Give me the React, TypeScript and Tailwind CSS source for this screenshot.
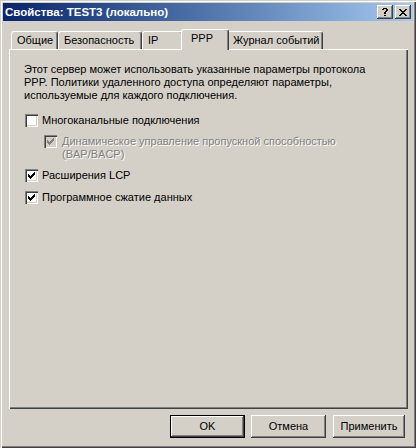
import React from "react";

const CHECK = [
  [6],
  [5, 6],
  [0, 4, 5, 6],
  [0, 1, 3, 4, 5],
  [0, 1, 2, 3, 4],
  [1, 2, 3],
  [2],
];

const CLOSE = [
  [0, 1, 6, 7],
  [1, 2, 5, 6],
  [2, 3, 4, 5],
  [3, 4],
  [2, 3, 4, 5],
  [1, 2, 5, 6],
  [0, 1, 6, 7],
];

const HELP = [
  [1, 2, 3, 4],
  [0, 1, 4, 5],
  [4, 5],
  [3, 4],
  [2, 3],
  [2, 3],
  [],
  [2, 3],
];

function Pixels({ rows, w, color }: { rows: number[][]; w: number; color: string }) {
  return (
    <svg width={w} height={rows.length} viewBox={`0 0 ${w} ${rows.length}`} shapeRendering="crispEdges">
      {rows.map((r, y) =>
        r.map((x) => <rect key={`${x}-${y}`} x={x} y={y} width={1} height={1} fill={color} />)
      )}
    </svg>
  );
}

function CheckBox({ checked, disabled }: { checked: boolean; disabled?: boolean }) {
  return (
    <div
      className={`w-[13px] h-[13px] shrink-0 flex items-center justify-center shadow-[inset_1px_1px_#808080,inset_2px_2px_#404040,inset_-1px_-1px_#ffffff,inset_-2px_-2px_#d4d0c8] ${
        disabled ? "bg-[#d4d0c8]" : "bg-white"
      }`}
    >
      {checked && <Pixels rows={CHECK} w={7} color={disabled ? "#808080" : "#000000"} />}
    </div>
  );
}

function CaptionButton({ children }: { children: React.ReactNode }) {
  return (
    <div className="w-[16px] h-[14px] bg-[#d4d0c8] flex items-center justify-center shadow-[inset_-1px_-1px_#404040,inset_1px_1px_#ffffff,inset_-2px_-2px_#808080]">
      {children}
    </div>
  );
}

function Tab({ label, width, selected }: { label: string; width: number; selected?: boolean }) {
  if (selected) {
    return (
      <div
        style={{ width: width + 4 }}
        className="relative z-10 h-[21px] -mx-[2px] -mb-[1px] bg-[#d4d0c8] border-l border-t border-white border-r border-r-[#404040] rounded-t-[3px] shadow-[inset_-1px_0_#808080] flex items-start pl-[9px] pt-[2px] leading-[13px] whitespace-nowrap"
      >
        {label}
      </div>
    );
  }
  return (
    <div
      style={{ width }}
      className="h-[18px] bg-[#d4d0c8] border-l border-t border-white border-r border-r-[#404040] rounded-t-[3px] shadow-[inset_-1px_0_#808080] flex items-start pl-[5px] pt-[2px] leading-[13px] whitespace-nowrap"
    >
      {label}
    </div>
  );
}

function Button({ label, isDefault, width }: { label: string; isDefault?: boolean; width: number }) {
  return (
    <div
      style={{ width }}
      className={`h-[23px] bg-[#d4d0c8] flex items-center justify-center leading-[13px] ${
        isDefault
          ? "border border-black shadow-[inset_-1px_-1px_#404040,inset_1px_1px_#ffffff,inset_-2px_-2px_#808080]"
          : "shadow-[inset_-1px_-1px_#404040,inset_1px_1px_#ffffff,inset_-2px_-2px_#808080]"
      }`}
    >
      {label}
    </div>
  );
}

export default function App() {
  return (
    <div className="w-[416px] h-[448px] bg-[#d4d0c8] p-[3px] flex flex-col text-[11px] text-black font-['Liberation_Sans',Arial,sans-serif] shadow-[inset_1px_1px_#d4d0c8,inset_2px_2px_#ffffff,inset_-1px_-1px_#404040,inset_-2px_-2px_#808080]">
      {/* Title bar */}
      <div className="h-[18px] flex items-center pl-[2px] pr-[2px] bg-gradient-to-r from-[#0a246a] to-[#a6caf0]">
        <div className="flex-1 text-white font-bold text-[11.5px] leading-[13px] whitespace-nowrap">Свойства: TEST3 (локально)</div>
        <div className="flex items-center">
          <CaptionButton>
            <Pixels rows={HELP} w={6} color="#000" />
          </CaptionButton>
          <div className="w-[2px]" />
          <CaptionButton>
            <Pixels rows={CLOSE} w={8} color="#000" />
          </CaptionButton>
        </div>
      </div>

      {/* Tabs */}
      <div className="mt-[8px] ml-[8px] h-[20px] flex items-end">
        <Tab label="Общие" width={47} />
        <Tab label="Безопасность" width={84} />
        <Tab label="IP" width={41} />
        <Tab label="PPP" width={44} selected />
        <Tab label="Журнал событий" width={96} />
      </div>

      {/* Panel */}
      <div className="ml-[6px] w-[399px] h-[360px] bg-[#d4d0c8] shadow-[inset_1px_1px_#ffffff,inset_-1px_-1px_#404040,inset_-2px_-2px_#808080] pt-[14px] pl-[15px] flex flex-col leading-[13px]">
        <p className="whitespace-nowrap">
          Этот сервер может использовать указанные параметры протокола
          <br />
          PPP. Политики удаленного доступа определяют параметры,
          <br />
          используемые для каждого подключения.
        </p>

        <div className="mt-[12px] ml-[1px] flex items-start">
          <CheckBox checked={false} />
          <span className="ml-[4px]">Многоканальные подключения</span>
        </div>

        <div className="mt-[8px] ml-[20px] flex items-start">
          <CheckBox checked disabled />
          <span className="ml-[5px] text-[#808080] [text-shadow:1px_1px_0_#ffffff]">
            Динамическое управление пропускной способностью
            <br />
            (BAP/BACP)
          </span>
        </div>

        <div className="mt-[8px] ml-[1px] flex items-start">
          <CheckBox checked />
          <span className="ml-[4px]">Расширения LCP</span>
        </div>

        <div className="mt-[9px] ml-[1px] flex items-start">
          <CheckBox checked />
          <span className="ml-[4px]">Программное сжатие данных</span>
        </div>
      </div>

      {/* Buttons */}
      <div className="mt-[6px] flex">
        <div className="ml-[167px]">
          <Button label="OK" isDefault width={75} />
        </div>
        <div className="ml-[6px]">
          <Button label="Отмена" width={75} />
        </div>
        <div className="ml-[7px]">
          <Button label="Применить" width={72} />
        </div>
      </div>
    </div>
  );
}
